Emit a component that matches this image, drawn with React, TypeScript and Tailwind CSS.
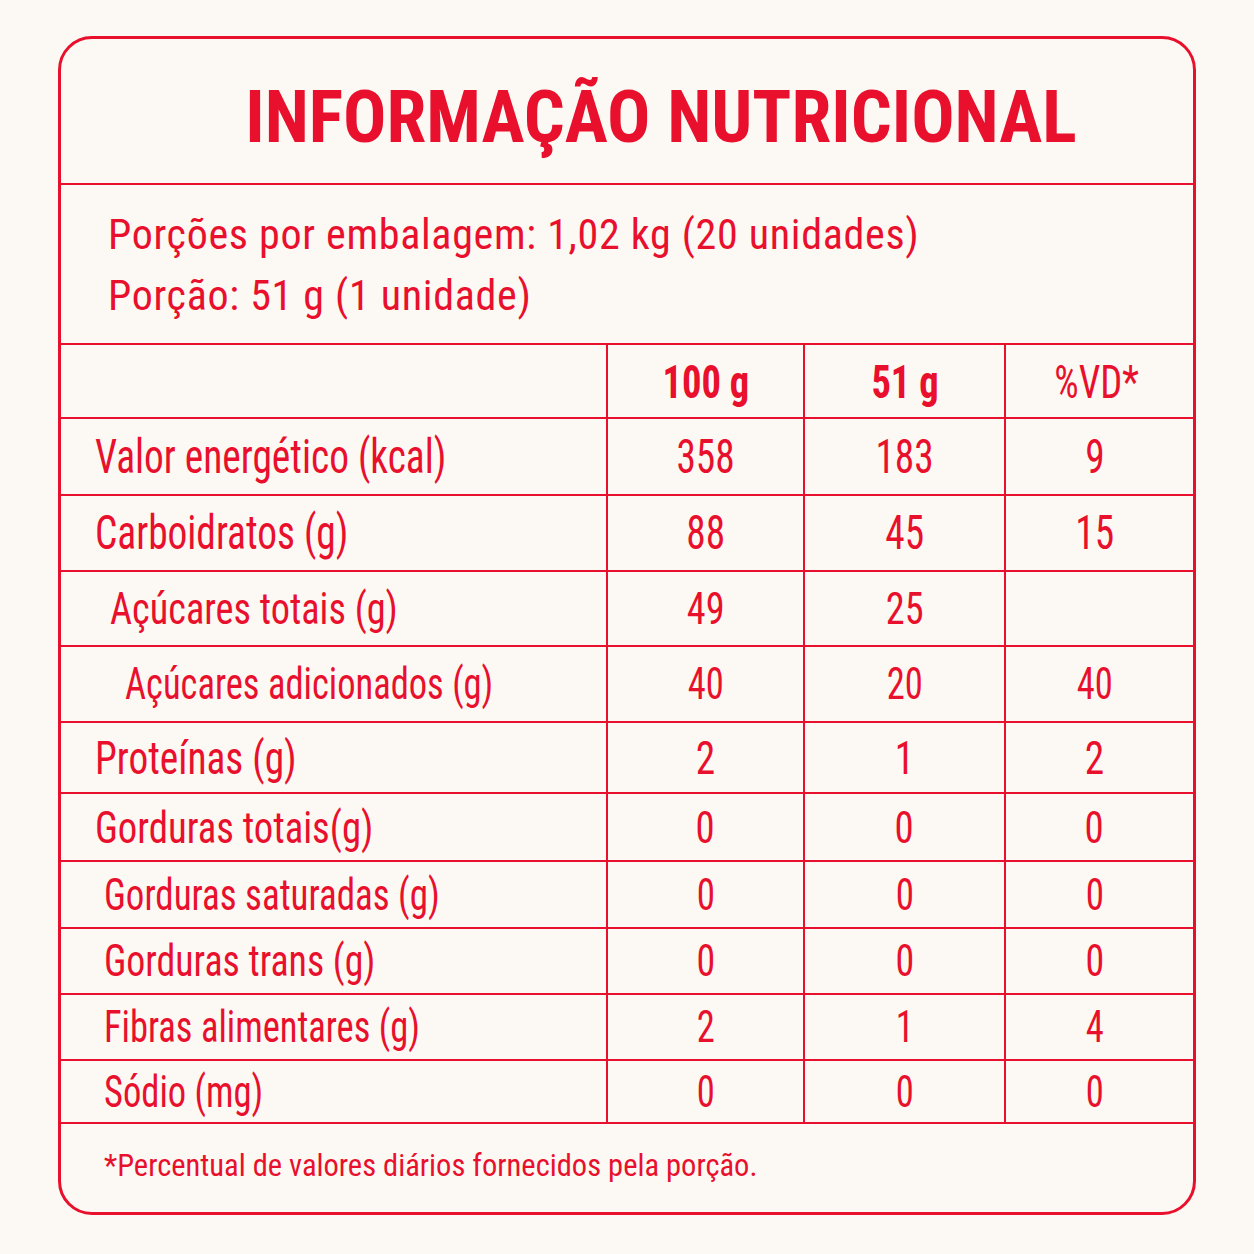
import React from 'react';

// Nutrition facts panel, Brazilian style
const RED = 'text-[#e8102c]';

type Row = {
  label: string;
  indent: string;
  size: string;
  squeeze: string;
  a: string;
  b: string;
  vd: string;
  h: string;
};

const rows: Row[] = [
  { label: 'Valor energético (kcal)', indent: 'pl-[34px]', size: 'text-[48px]', squeeze: 'scale-x-[0.82]', a: '358', b: '183', vd: '9', h: 'h-[77px]' },
  { label: 'Carboidratos (g)', indent: 'pl-[34px]', size: 'text-[48px]', squeeze: 'scale-x-[0.82]', a: '88', b: '45', vd: '15', h: 'h-[76px]' },
  { label: 'Açúcares totais (g)', indent: 'pl-[49px]', size: 'text-[44px]', squeeze: 'scale-x-[0.87]', a: '49', b: '25', vd: '', h: 'h-[75px]' },
  { label: 'Açúcares adicionados (g)', indent: 'pl-[64px]', size: 'text-[44px]', squeeze: 'scale-x-[0.83]', a: '40', b: '20', vd: '40', h: 'h-[76px]' },
  { label: 'Proteínas (g)', indent: 'pl-[34px]', size: 'text-[46px]', squeeze: 'scale-x-[0.855]', a: '2', b: '1', vd: '2', h: 'h-[71px]' },
  { label: 'Gorduras totais(g)', indent: 'pl-[34px]', size: 'text-[45px]', squeeze: 'scale-x-[0.86]', a: '0', b: '0', vd: '0', h: 'h-[68px]' },
  { label: 'Gorduras saturadas (g)', indent: 'pl-[43px]', size: 'text-[44px]', squeeze: 'scale-x-[0.84]', a: '0', b: '0', vd: '0', h: 'h-[67px]' },
  { label: 'Gorduras trans (g)', indent: 'pl-[43px]', size: 'text-[44px]', squeeze: 'scale-x-[0.86]', a: '0', b: '0', vd: '0', h: 'h-[66px]' },
  { label: 'Fibras alimentares (g)', indent: 'pl-[43px]', size: 'text-[44px]', squeeze: 'scale-x-[0.83]', a: '2', b: '1', vd: '4', h: 'h-[66px]' },
  { label: 'Sódio (mg)', indent: 'pl-[43px]', size: 'text-[44px]', squeeze: 'scale-x-[0.83]', a: '0', b: '0', vd: '0', h: 'h-[63px]' },
];

const cell = 'flex items-center justify-center border-l-2 border-[#e8102c]';
const cols = 'grid grid-cols-[545px_197px_201px_1fr] border-b-2 border-[#e8102c] leading-none';

// the label face is narrower than Roboto Condensed, so squeeze it a little
const Narrow = ({ children, left, squeeze = 'scale-x-[0.82]' }: { children: React.ReactNode; left?: boolean; squeeze?: string }) => (
  <span className={`inline-block whitespace-nowrap ${squeeze} ${left ? 'origin-left' : 'origin-center'}`}>
    {children}
  </span>
);

const App = () => {
  return (
    <div
      className={`min-h-[1254px] w-[1254px] bg-[#fcf9f4] pt-[36px] pl-[58px] ${RED}`}
      style={{ fontFamily: '"Roboto Condensed", "DejaVu Sans Condensed", sans-serif' }}
    >
      <div className="flex w-[1138px] flex-col overflow-hidden rounded-[34px] border-[3px] border-[#e8102c]">
        {/* title */}
        <div className="flex h-[146px] items-center justify-center border-b-2 border-[#e8102c] pl-[68px] pt-[14px]">
          <h1 className="text-[72px] font-bold leading-none">INFORMAÇÃO NUTRICIONAL</h1>
        </div>

        {/* serving info */}
        <div className="flex h-[160px] flex-col justify-center gap-[19px] border-b-2 border-[#e8102c] pl-[47px] pt-[2px] text-[42px] leading-none tracking-[0.7px]">
          <p>Porções por embalagem: 1,02 kg (20 unidades)</p>
          <p>Porção: 51 g (1 unidade)</p>
        </div>

        {/* table header */}
        <div className={`${cols} h-[74px] text-[47px]`}>
          <div />
          <div className={`${cell} font-bold`}><Narrow>100 g</Narrow></div>
          <div className={`${cell} font-bold`}><Narrow>51 g</Narrow></div>
          <div className={`${cell} pr-[6px]`}><Narrow>%VD*</Narrow></div>
        </div>

        {rows.map((r) => (
          <div key={r.label} className={`${cols} ${r.h} ${r.size}`}>
            <div className={`flex items-center ${r.indent}`}>
              <Narrow left squeeze={r.squeeze}>{r.label}</Narrow>
            </div>
            <div className={cell}><Narrow squeeze={r.squeeze}>{r.a}</Narrow></div>
            <div className={cell}><Narrow squeeze={r.squeeze}>{r.b}</Narrow></div>
            <div className={`${cell} pr-[10px]`}><Narrow squeeze={r.squeeze}>{r.vd}</Narrow></div>
          </div>
        ))}

        {/* footnote */}
        <div className="flex h-[88px] items-center pl-[43px] pb-[4px] text-[30.5px] leading-none">
          *Percentual de valores diários fornecidos pela porção.
        </div>
      </div>
    </div>
  );
};

export default App;
